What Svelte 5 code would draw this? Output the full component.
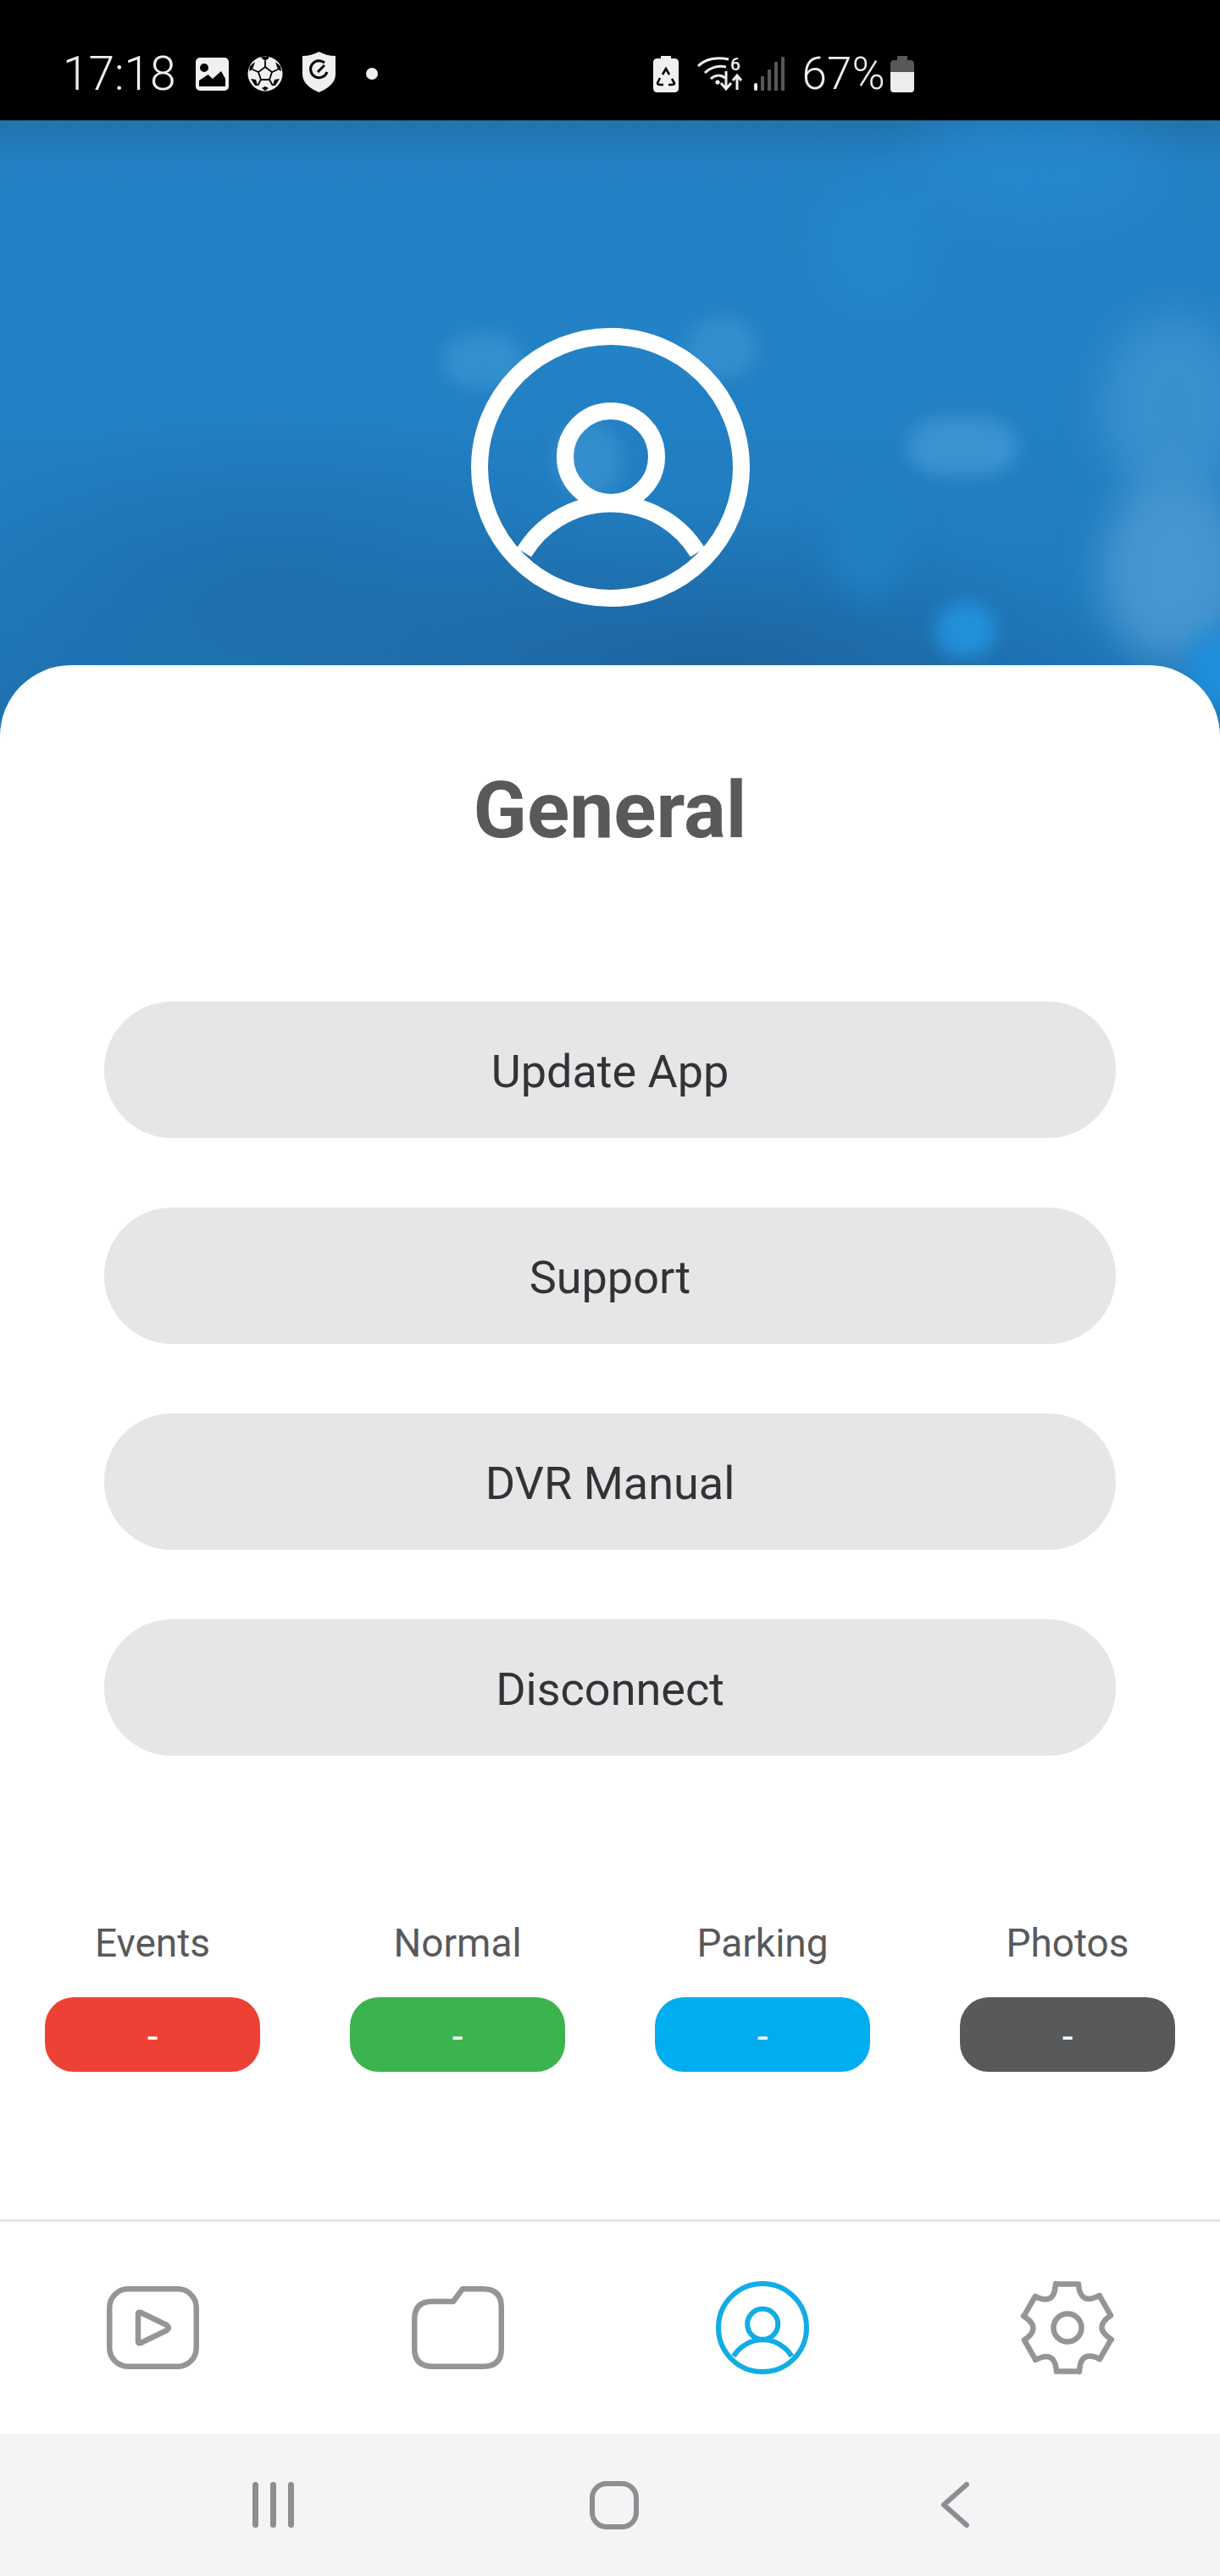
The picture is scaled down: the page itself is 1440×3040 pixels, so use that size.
<script>
  const buttons = ['Update App', 'Support', 'DVR Manual', 'Disconnect'];
  const counts = [
    { label: 'Events', cls: 'red' },
    { label: 'Normal', cls: 'green' },
    { label: 'Parking', cls: 'blue' },
    { label: 'Photos', cls: 'dark' }
  ];
  const blobs = ['b1','b2','b3','b4','b5','b6','b7','b8','b9','b10','b11'];

  function gearPath() {
    const rot = (x, y, a) => {
      const c = Math.cos(a), s = Math.sin(a);
      return `${(x * c - y * s + 60).toFixed(2)} ${(x * s + y * c + 60).toFixed(2)}`;
    };
    let d = '';
    for (let i = 0; i < 6; i++) {
      const a = (i * Math.PI) / 3;
      d += (i === 0 ? 'M' : 'L') + rot(-13, -51.5, a);
      d += 'L' + rot(13, -51.5, a);
      d += 'C' + rot(13.5, -42, a) + ' ' + rot(17, -34, a) + ' ' + rot(25, -34, a);
      d += 'C' + rot(30, -34, a) + ' ' + rot(33, -36, a) + ' ' + rot(38, -38, a);
    }
    return d + 'Z';
  }
  const gear = gearPath();
</script>

{#snippet person(size, sw, color)}
  <svg class="person" width={size} height={size} viewBox="0 0 329 329" fill="none" stroke={color} stroke-width={sw}>
    <circle cx="164.5" cy="164.5" r={164.5 - sw / 2} />
    <circle cx="165" cy="152" r="54" />
    <path d="M62.5 265A120 120 0 0 1 267.5 265" />
  </svg>
{/snippet}

<div class="page">
  <header class="status">
    <span class="clock">17:18</span>
    <svg class="i-pic" width="39" height="39" viewBox="0 0 39 39">
      <rect width="39" height="39" rx="5" fill="#f0f0f0" />
      <circle cx="10" cy="12" r="5" fill="#000" />
      <path d="M4 27L14.6 20 20 25 30 16 35 25V34H4Z" fill="#000" />
    </svg>
    <svg class="i-ball" width="42" height="42" viewBox="0 0 42 42">
      <circle cx="21" cy="21" r="20.5" fill="#f0f0f0" />
      <path d="M21 13l8 6-3 9H16l-3-9Z" fill="#f0f0f0" stroke="#000" stroke-width="1.8" />
      <path d="M21 13V6M29 19l7-3M26 28l4 7M16 28l-4 7M13 19l-7-3" stroke="#000" stroke-width="1.8" />
      <path d="M16 2l5 4 5-4-2-1h-6ZM33 7l3 9 4 2-1-6ZM9 7l-3 9-4 2 1-6ZM9 35h3l-2-7-6-1ZM33 35h-3l2-7 6-1ZM17 38l4-2 4 2-4 3Z" fill="#000" />
    </svg>
    <svg class="i-shield" width="39" height="48" viewBox="0 0 39 48">
      <path d="M19.5 0C25 3 32 5 39 5V27C39 37 29 44 19.5 48 10 44 0 37 0 27V5C7 5 14 3 19.5 0Z" fill="#f0f0f0" />
      <path d="M26 13A10 10 0 1 0 29 24" fill="none" stroke="#000" stroke-width="3" />
      <path d="M18 24L26 16" stroke="#000" stroke-width="3" />
    </svg>
    <span class="dot"></span>

    <svg class="i-recycle" width="30" height="43" viewBox="0 0 30 43">
      <path d="M9 0H21V3H25Q30 3 30 8V38Q30 43 25 43H5Q0 43 0 38V8Q0 3 5 3H9Z" fill="#f0f0f0" />
      <path d="M11 22L15 15 19 22M22 27L25 32Q25 34 22 34H18M12 34H8Q5 34 5 32L8 26" fill="none" stroke="#000" stroke-width="2.6" />
    </svg>
    <svg class="i-wifi" width="56" height="56" viewBox="0 -8 56 56" fill="none" stroke="#f0f0f0" stroke-width="3">
      <path d="M1 11C10 2 24 0 37 3" />
      <path d="M9 19C16 12 26 10 34 12" />
      <path d="M16 26C21 21 28 21 33 25" />
      <circle cx="24" cy="30" r="2.6" fill="#f0f0f0" stroke="none" />
      <path d="M34 17V37M28 31L34 38 40 31" />
      <path d="M47 22V39M42 28L47 22 52 28" />
      <text x="45" y="16" class="six" fill="#f0f0f0" stroke="none">6</text>
    </svg>
    <svg class="i-signal" width="36" height="40" viewBox="0 0 36 40">
      <rect x="0" y="31" width="4" height="9" rx="2" fill="#f0f0f0" />
      <rect x="8" y="23" width="4" height="17" rx="1" fill="#58585a" />
      <rect x="16" y="15" width="4" height="25" rx="1" fill="#58585a" />
      <rect x="24" y="6" width="4" height="34" rx="1" fill="#58585a" />
      <rect x="32" y="0" width="4" height="40" rx="1" fill="#58585a" />
    </svg>
    <span class="pct">67%</span>
    <svg class="i-batt" width="28" height="43" viewBox="0 0 28 43">
      <path d="M8 0H20V5H24Q28 5 28 10V19H0V10Q0 5 4 5H8Z" fill="#58585a" />
      <path d="M0 19H28V39Q28 43 24 43H4Q0 43 0 39Z" fill="#ededf0" />
    </svg>
  </header>

  <section class="hero">
    {#each blobs as b}
      <span class="blob {b}"></span>
    {/each}
    <div class="avatar">
      {@render person(329, 20, '#fff')}
    </div>
  </section>

  <main class="sheet">
    <h1>General</h1>
    <div class="actions">
      {#each buttons as b}
        <button type="button">{b}</button>
      {/each}
    </div>
    <div class="counts">
      {#each counts as c}
        <div class="count">
          <span class="label">{c.label}</span>
          <span class="pill {c.cls}">-</span>
        </div>
      {/each}
    </div>
  </main>

  <nav class="tabs">
    <div class="tab">
      <svg width="109" height="98" viewBox="0 0 109 98" fill="none" stroke="#939598" stroke-width="6.5">
        <rect x="3.25" y="3.25" width="102.5" height="91.5" rx="22" />
        <path d="M37 32.5Q37 30 40 31L71 46Q75 49 71 52L40 67Q37 68 37 65.5Z" stroke-linejoin="round" />
      </svg>
    </div>
    <div class="tab">
      <svg width="109" height="98" viewBox="0 0 109 98" fill="none" stroke="#939598" stroke-width="6.5">
        <path d="M24 18H49L60 3.25H84Q105.75 3.25 105.75 24V74Q105.75 94.75 84 94.75H25Q3.25 94.75 3.25 74V39Q3.25 18 24 18Z" stroke-linejoin="round" />
      </svg>
    </div>
    <div class="tab">
      {@render person(110, 18, '#12ace6')}
    </div>
    <div class="tab">
      <svg width="120" height="120" viewBox="0 0 120 120" fill="none" stroke="#939598" stroke-width="6.5" stroke-linejoin="round">
        <path d={gear} />
        <circle cx="60" cy="60" r="16.5" />
      </svg>
    </div>
  </nav>

  <footer class="sysnav">
    <div class="key">
      <svg width="49" height="54" viewBox="0 0 49 54" fill="#8e8e91">
        <rect x="0" y="0" width="7" height="54" rx="3.5" />
        <rect x="21" y="0" width="7" height="54" rx="3.5" />
        <rect x="42" y="0" width="7" height="54" rx="3.5" />
      </svg>
    </div>
    <div class="key">
      <svg width="58" height="57" viewBox="0 0 58 57" fill="none" stroke="#8e8e91" stroke-width="6">
        <rect x="3" y="3" width="52" height="51" rx="17" />
      </svg>
    </div>
    <div class="key">
      <svg width="34" height="54" viewBox="0 0 34 54" fill="none" stroke="#8e8e91" stroke-width="6" stroke-linecap="round" stroke-linejoin="round">
        <path d="M31 3L4 27 31 51" />
      </svg>
    </div>
  </footer>
</div>

<style>
  :global(body) {
    margin: 0;
    background: #fff;
  }
  .page {
    width: 1440px;
    height: 3040px;
    display: flex;
    flex-direction: column;
    overflow: hidden;
    font-family: Roboto, "Liberation Sans", sans-serif;
  }

  /* status bar */
  .status {
    box-sizing: border-box;
    height: 142px;
    flex: none;
    background: #000;
    padding: 32px 0 0 74px;
    display: flex;
    align-items: center;
    color: #f0f0f0;
  }
  .status svg { flex: none; display: block; }
  .clock, .pct {
    flex: none;
    font-weight: 300;
    line-height: 62px;
    white-space: nowrap;
  }
  .clock { font-size: 55px; }
  .pct { font-size: 53px; margin-left: 21px; }
  .i-pic { margin-left: 23px; }
  .i-ball { margin-left: 22px; }
  .i-shield { margin: -4px 0 0 23px; }
  .dot {
    width: 14px;
    height: 14px;
    margin-left: 36px;
    border-radius: 50%;
    background: #f0f0f0;
    flex: none;
  }
  .i-recycle { margin-left: 325px; }
  .i-wifi { margin: 0 0 0 22px; transform: translateY(0); }
  .six { font-family: Roboto, sans-serif; font-size: 21px; font-weight: 500; text-anchor: middle; }
  .i-signal { margin-left: 11px; }
  .i-batt { margin-left: 6px; }

  /* hero */
  .hero {
    position: relative;
    flex: none;
    height: 743px;
    overflow: hidden;
    background:
      radial-gradient(500px 200px at 840px 650px, #1d649f 0%, rgba(29, 100, 159, 0) 100%),
      radial-gradient(480px 220px at 330px 570px, #1f6dab 0%, rgba(31, 109, 171, 0) 100%),
      linear-gradient(180deg, #2373aa 0, #2380c4 50px, #2381c6 260px, #207cbe 560px, #1e6fad 743px);
  }
  .avatar {
    position: relative;
    z-index: 1;
    display: flex;
    justify-content: center;
    padding-top: 245px;
  }
  .person { display: block; }
  .blob {
    position: absolute;
    border-radius: 50%;
    filter: blur(10px);
  }
  .b1 { left: 522px; top: 250px; width: 96px; height: 68px; background: #348fce; }
  .b2 { left: 810px; top: 232px; width: 84px; height: 72px; background: #348ecd; }
  .b3 { left: 1072px; top: 350px; width: 128px; height: 70px; background: #3d92d0; border-radius: 40%; }
  .b4 { left: 1104px; top: 568px; width: 72px; height: 66px; background: #2290da; }
  .b5 { left: 655px; top: 356px; width: 80px; height: 90px; background: #348ecd; }
  .b6 { left: 960px; top: 60px; width: 150px; height: 170px; background: #2386c9; filter: blur(24px); }
  .b7 { left: 1300px; top: 230px; width: 170px; height: 220px; background: #3a90cd; filter: blur(24px); }
  .b8 { left: 1300px; top: 420px; width: 170px; height: 220px; background: #4896cf; filter: blur(24px); }
  .b9 { left: 1400px; top: 600px; width: 80px; height: 100px; background: #1f8fdc; filter: blur(16px); }
  .b10 { left: 980px; top: 440px; width: 90px; height: 120px; background: #2180c3; filter: blur(20px); }
  .b11 { left: 1070px; top: 0; width: 300px; height: 130px; background: #2586cd; filter: blur(30px); }

  /* sheet */
  .sheet {
    position: relative;
    margin-top: -100px;
    box-sizing: border-box;
    height: 1834px;
    flex: none;
    background: #fff;
    border-radius: 84px 84px 0 0;
    padding-top: 122px;
  }
  h1 {
    margin: 0;
    text-align: center;
    color: #58595b;
    font-size: 93px;
    font-weight: 700;
    line-height: 100px;
  }
  .actions {
    margin: 175px 123px 0;
    display: flex;
    flex-direction: column;
    gap: 82px;
  }
  button {
    height: 161px;
    border: 0;
    padding: 4px 0 0;
    border-radius: 80px;
    background: #e6e5e8;
    color: #333336;
    font: 400 54px/60px Roboto, "Liberation Sans", sans-serif;
  }
  .counts {
    margin-top: 193px;
    display: grid;
    grid-template-columns: repeat(4, 360px);
  }
  .count {
    display: flex;
    flex-direction: column;
    align-items: center;
    gap: 36px;
  }
  .label {
    color: #58595b;
    font-size: 46px;
    line-height: 56px;
  }
  .pill {
    width: 254px;
    height: 88px;
    border-radius: 34px;
    color: #fff;
    font-size: 46px;
    line-height: 92px;
    text-align: center;
  }
  .red { background: #ee4136; }
  .green { background: #3bb44f; }
  .blue { background: #00aeef; }
  .dark { background: #58595b; }

  /* tab bar */
  .tabs {
    box-sizing: border-box;
    height: 253px;
    flex: none;
    border-top: 3px solid #e6e6e8;
    background: #fff;
    display: grid;
    grid-template-columns: repeat(4, 360px);
    align-items: center;
    justify-items: center;
  }
  .tab { display: flex; align-items: center; justify-content: center; }
  .tab svg { display: block; }

  /* system nav */
  .sysnav {
    flex: 1;
    background: #f4f3f6;
    padding-left: 121px;
    display: grid;
    grid-template-columns: repeat(3, 402.5px);
    align-items: center;
    justify-items: center;
  }
  .key { display: flex; }
  .key svg { display: block; }
</style>
